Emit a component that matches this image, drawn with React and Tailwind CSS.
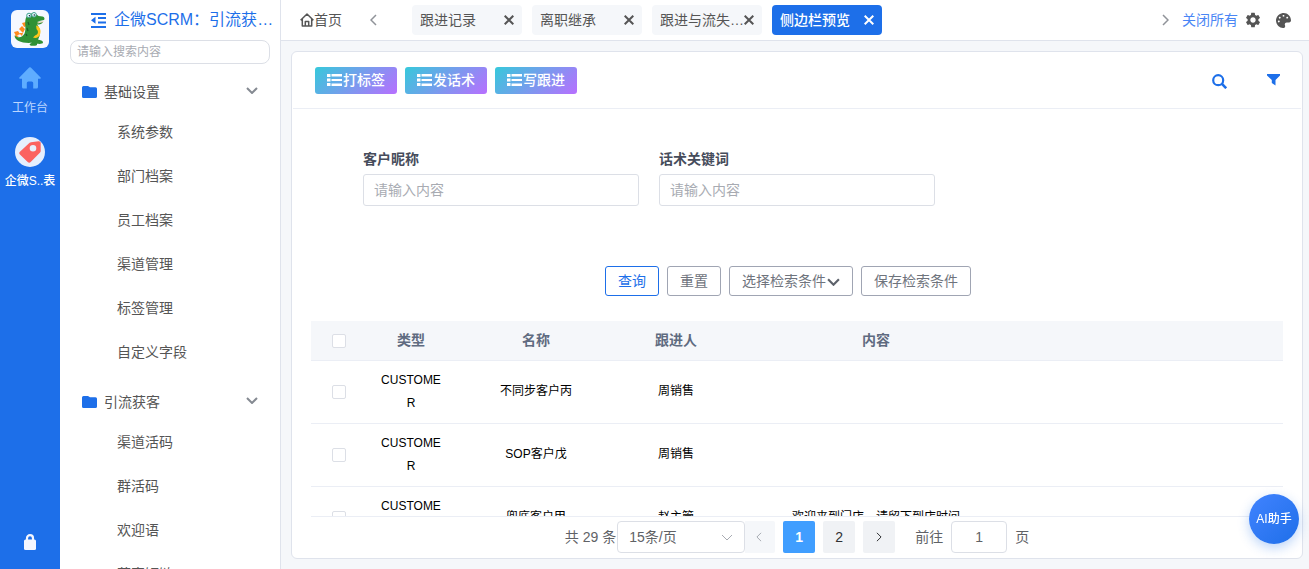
import { FaPalette } from "react-icons/fa";
import { MdSettings } from "react-icons/md";

const menu = [
  {
    title: "基础设置",
    items: ["系统参数", "部门档案", "员工档案", "渠道管理", "标签管理", "自定义字段"],
  },
  { title: "引流获客", items: ["渠道活码", "群活码", "欢迎语", "获客短链"] },
];

const tabs = [
  { label: "跟进记录" },
  { label: "离职继承" },
  { label: "跟进与流失分析" },
  { label: "侧边栏预览", active: true },
];

const rows = [
  { type: "CUSTOMER", name: "不同步客户丙", owner: "周销售", content: "" },
  { type: "CUSTOMER", name: "SOP客户戊", owner: "周销售", content: "" },
  { type: "CUSTOMER", name: "兜底客户甲", owner: "赵主管", content: "欢迎来到门店，请留下到店时间" },
];

function Crocodile() {
  return (
    <svg viewBox="0 0 38 38" className="size-[38px]" aria-hidden="true">
      <path
        d="M3 22l4-1 2 3-4 2zM5 28l-1-3 4 1zM8 19l3-3 3 3-2 4zM11 13l4-1 1 4-3 1zM12 23l-4 0 3 3z"
        fill="#ff8a1f"
      />
      <path
        d="M3.500 25.500c4 3 8 2 10-2 2-5 0-9 1-14 1-4 3-6 7-6 2 0 4 .500 6 2.500l4 .500c2 .500 2.500 2 1.500 3.500l-7 1.500 6 .500c-1 2-3 2.500-6 2.500 2 2 3 5 3 8 0 3-1 5-2 7 2 .500 5 1 5 3 0 1.500-3 1.500-6 1.300.500 1.700-1 2-4 2-3 0-4-.500-3-2l2-1C11 33.500 4 31 3.500 25.500z"
        fill="#2f9135"
      />
      <path d="M25 15.500c4 1 5.500 5 4 9-1 3-4 4-7 3 4-3 4-8 3-12z" fill="#ffc61a" />
      <path d="M21 20c3-1 5 0 5 2s-2 3-4 2" fill="none" stroke="#2f9135" strokeWidth="2" strokeLinecap="round" />
      <path d="M17 12l1 3M16 18l1 3M15 24l1 2" stroke="#1c5c2b" strokeWidth="1.200" />
      <path d="M32.500 11.500l-6 1.500" stroke="#f7d8c0" strokeWidth="1.200" />
      <circle cx="18" cy="5.500" r="2.300" fill="#e9fbff" stroke="#3f9f8f" strokeWidth="1" />
      <circle cx="23" cy="4.800" r="2.300" fill="#e9fbff" stroke="#3f9f8f" strokeWidth="1" />
      <circle cx="18.500" cy="5.700" r=".800" fill="#112233" />
      <circle cx="23.300" cy="5" r=".800" fill="#112233" />
    </svg>
  );
}

function Home() {
  return (
    <svg viewBox="0 0 22 22" className="size-[22px]" fill="currentColor" aria-hidden="true">
      <path d="M10.200.500a1.200 1.200 0 0 1 1.600 0l9.800 10c.500.600.200 1.300-.500 1.300H19v8.200a1.500 1.500 0 0 1-1.500 1.500h-3.300V16a1.500 1.500 0 0 0-1.500-1.500H9.300A1.500 1.500 0 0 0 7.800 16v5.500H4.500A1.500 1.500 0 0 1 3 20v-8.200H.900c-.700 0-1-.700-.500-1.300z" />
    </svg>
  );
}

function HomeOutline() {
  return (
    <svg
      viewBox="0 0 14 14"
      className="size-[14px]"
      fill="none"
      stroke="currentColor"
      strokeWidth="1.500"
      strokeLinejoin="round"
      aria-hidden="true"
    >
      <path d="M.600 7.300L7 1l6.400 6.300M2.300 6v7h9.400V6M5.300 13V8.600h3.400V13" />
    </svg>
  );
}

function Tag() {
  return (
    <svg viewBox="0 0 22 22" className="size-[22px]" aria-hidden="true">
      <path
        fillRule="evenodd"
        fill="#fb6260"
        d="M12 1.200 19.500.300a1.800 1.800 0 0 1 2.200 1.900V10a2 2 0 0 1-.600 1.400l-9.400 9.600a2.200 2.200 0 0 1-3 0L.900 13.500a2 2 0 0 1 0-2.800l9.700-8.900A3 3 0 0 1 12 1.200zM14 4a3.300 3.300 0 1 0 0 6.600A3.300 3.300 0 0 0 14 4z"
      />
    </svg>
  );
}

function Lock() {
  return (
    <svg viewBox="0 0 12 16" className="h-4 w-3" aria-hidden="true">
      <path d="M3 7V4.200a3 3 0 0 1 6 0V7" fill="none" stroke="#f5f7ff" strokeWidth="2.200" />
      <rect x="0" y="5.500" width="12" height="10.500" rx="1.500" fill="#f5f7ff" />
    </svg>
  );
}

function Fold() {
  return (
    <svg viewBox="0 0 15 15" className="h-[15px] w-[15px] shrink-0" fill="currentColor" aria-hidden="true">
      <path d="M0 0h15v2H0zM7 4h8v2H7zM7 8.500h8v2H7zM0 13h15v2H0zM4.500 3.800v7L0 7.300z" />
    </svg>
  );
}

function Folder() {
  return (
    <svg viewBox="0 0 15 12" className="h-3 w-[15px]" fill="currentColor" aria-hidden="true">
      <path d="M1.500 0H6l2 1.200h5.500A1.500 1.500 0 0 1 15 2.700v7.800a1.500 1.500 0 0 1-1.500 1.500h-12A1.500 1.500 0 0 1 0 10.500v-9A1.500 1.500 0 0 1 1.500 0z" />
    </svg>
  );
}

function Chevron({ className, width = 2, d = "M1 1l5 5 5-5", box = "0 0 12 7" }) {
  return (
    <svg viewBox={box} className={className} fill="none" stroke="currentColor" strokeWidth={width} aria-hidden="true">
      <path d={d} />
    </svg>
  );
}

function Arrow({ left, className, width }) {
  return <Chevron box="0 0 7 12" d={left ? "M6 1L1 6l5 5" : "M1 1l5 5-5 5"} className={className} width={width} />;
}

function Cross() {
  return (
    <svg viewBox="0 0 10 10" className="size-[10px]" stroke="currentColor" strokeWidth="2" aria-hidden="true">
      <path d="M.700.700l8.600 8.600M9.300.700L.700 9.300" />
    </svg>
  );
}

function ListIcon() {
  return (
    <svg viewBox="0 0 15 12" className="h-3 w-[15px]" fill="currentColor" aria-hidden="true">
      <path d="M0 0h3.500v3H0zM4.500 0H15v2.500H4.500zM0 4.500h3.500v3H0zM4.500 5H15v2H4.500zM0 9h3.500v3H0zM4.500 9.500H15V12H4.500z" />
    </svg>
  );
}

function Check({ label }) {
  return (
    <input
      type="checkbox"
      aria-label={label}
      className="mx-auto block size-[14px] appearance-none rounded-[2px] border border-[#dcdfe6] bg-white checked:bg-[#1d6fe9]"
    />
  );
}

function Field({ id, label }) {
  return (
    <div>
      <label htmlFor={id} className="block h-[25px] text-sm leading-5 font-bold text-[#464c5b]">
        {label}
      </label>
      <input
        id={id}
        placeholder="请输入内容"
        className="h-8 w-full rounded-[3px] border border-[#dcdfe6] px-[10px] text-sm outline-none placeholder:text-[#a8abb2]"
      />
    </div>
  );
}

function Rail() {
  return (
    <aside className="flex w-[60px] shrink-0 flex-col items-center bg-[#1d6fe9] pt-[10px] pb-[19px] text-xs">
      <div className="rounded-md bg-[#f5f8ff]">
        <Crocodile />
      </div>
      <a href="#work" className="mt-[19px] flex flex-col items-center text-[#5fadff]">
        <Home />
        <span className="mt-[9px] leading-5 text-[#bcd6ff]">工作台</span>
      </a>
      <a href="#scrm" className="mt-[19px] flex flex-col items-center text-white">
        <span className="flex size-[30px] items-center justify-center rounded-full bg-[#e6effd]">
          <Tag />
        </span>
        <span className="mt-1 leading-5 font-medium">企微S..表</span>
      </a>
      <button aria-label="锁屏" className="mt-auto">
        <Lock />
      </button>
    </aside>
  );
}

function Sidebar() {
  return (
    <nav className="flex w-[221px] shrink-0 flex-col border-r border-[#dfe3ec] bg-white">
      <div className="flex h-10 items-center gap-2 pr-1 pl-[31px] text-[#1d6fe9]">
        <Fold />
        <h1 className="truncate text-base">企微SCRM：引流获客管理</h1>
      </div>
      <div className="px-[10px]">
        <input
          aria-label="搜索菜单"
          placeholder="请输入搜索内容"
          className="block h-6 w-full rounded-lg border border-[#dcdfe6] px-[6px] text-xs outline-none placeholder:text-[#a8abb2]"
        />
      </div>
      <div className="min-h-0 flex-1 overflow-hidden text-sm text-[#555]">
        {menu.map((group) => (
          <section key={group.title}>
            <button className="mt-[10px] flex h-9 w-full items-center px-[22px]">
              <span className="text-[#1d6fe9]">
                <Folder />
              </span>
              <span className="ml-[7px]">{group.title}</span>
              <Chevron className="mb-[3px] ml-auto h-[7px] w-3 text-[#858a92]" />
            </button>
            <ul>
              {group.items.map((item) => (
                <li key={item}>
                  <a href="#menu" className="flex h-11 items-center pl-[57px]">
                    {item}
                  </a>
                </li>
              ))}
            </ul>
          </section>
        ))}
      </div>
    </nav>
  );
}

function TopBar() {
  return (
    <header className="flex h-[41px] shrink-0 items-center border-b border-[#dfe3ec] bg-white pr-[18px] pl-[19px] text-sm text-[#555]">
      <a href="#home" className="flex items-center">
        <HomeOutline />
        首页
      </a>
      <button aria-label="向左" className="ml-7 text-[#909399]">
        <Arrow left width={1.5} className="h-3 w-[7px]" />
      </button>
      <div className="ml-[35px] flex gap-[10px]">
        {tabs.map((tab) => (
          <div
            key={tab.label}
            className={
              "flex h-[30px] w-[110px] items-center rounded px-2 " +
              (tab.active ? "bg-[#1d6fe9] font-medium text-white" : "bg-[#f5f7fa]")
            }
          >
            <a href="#tab" className="w-[84px] truncate">
              {tab.label}
            </a>
            <button aria-label={"关闭" + tab.label}>
              <Cross />
            </button>
          </div>
        ))}
      </div>
      <button aria-label="向右" className="mr-[13px] ml-auto text-[#909399]">
        <Arrow width={1.5} className="h-3 w-[7px]" />
      </button>
      <button className="text-[#4a86f5]">关闭所有</button>
      <button aria-label="设置" className="ml-[6px]">
        <MdSettings className="size-[18px]" />
      </button>
      <button aria-label="主题" className="ml-[14px]">
        <FaPalette className="size-[15px]" />
      </button>
    </header>
  );
}

function SearchPanel() {
  return (
    <form onSubmit={(e) => e.preventDefault()}>
      <div className="grid grid-cols-3 gap-5 px-[71px] pt-10">
        <Field id="nickname" label="客户昵称" />
        <Field id="keyword" label="话术关键词" />
      </div>
      <div className="mt-[60px] flex justify-center gap-2 pr-[18px] text-sm text-[#6f747d]">
        <button className="h-[30px] rounded-[3px] border border-[#1d6fe9] px-3 text-[#1d6fe9]">查询</button>
        <button className="h-[30px] rounded-[3px] border border-[#a0a5b3] px-3">重置</button>
        <button className="flex h-[30px] items-center rounded-[3px] border border-[#a0a5b3] px-3">
          选择检索条件
          <Chevron width={2} className="mt-[2px] ml-px h-2 w-[13px] text-[#5d626b]" />
        </button>
        <button className="h-[30px] rounded-[3px] border border-[#a0a5b3] px-3">保存检索条件</button>
      </div>
    </form>
  );
}

function DataTable() {
  return (
    <div className="mx-[19px] mt-[25px] min-h-0 flex-1 overflow-hidden border-b border-[#ebeef5]">
      <table className="w-full table-fixed border-collapse text-center">
        <colgroup>
          <col className="w-[55px]" />
          <col className="w-[90px]" />
          <col className="w-[160px]" />
          <col className="w-[120px]" />
          <col className="w-[280px]" />
          <col />
        </colgroup>
        <thead className="bg-[#f5f7fa] text-sm text-[#5f6b80]">
          <tr className="h-[39px] border-b border-[#ebeef5]">
            <th className="pt-px">
              <Check label="全选" />
            </th>
            <th>类型</th>
            <th>名称</th>
            <th>跟进人</th>
            <th>内容</th>
            <th></th>
          </tr>
        </thead>
        <tbody className="text-xs leading-[23px] text-black">
          {rows.map((row) => (
            <tr key={row.name} className="h-[63px] border-b border-[#ebeef5]">
              <td>
                <Check label={"选择" + row.name} />
              </td>
              <td className="px-3 py-2 break-all">{row.type}</td>
              <td className="px-3">{row.name}</td>
              <td className="px-3">{row.owner}</td>
              <td className="px-3">{row.content}</td>
              <td></td>
            </tr>
          ))}
        </tbody>
      </table>
    </div>
  );
}

function Pagination() {
  return (
    <div className="flex shrink-0 items-center justify-center pt-1 pb-[5px] text-sm text-[#606266]">
      <span className="mr-px">共 29 条</span>
      <div className="grid h-8 w-32 items-center">
        <select
          aria-label="每页条数"
          className="col-start-1 row-start-1 h-8 w-full appearance-none rounded border border-[#dcdfe6] bg-white pl-[11px]"
        >
          <option>15条/页</option>
        </select>
        <Chevron
          width={1}
          className="pointer-events-none col-start-1 row-start-1 mr-3 h-[7px] w-3 justify-self-end text-[#a8abb2]"
        />
      </div>
      <button
        aria-label="上一页"
        disabled
        className="flex h-8 w-[30px] items-center justify-center rounded-r-[2px] bg-[#f5f7fa] text-[#a8abb2]"
      >
        <Arrow left width={1.2} className="mr-[2px] h-[10px] w-[6px]" />
      </button>
      <button className="ml-2 size-8 rounded-[2px] bg-[#409eff] font-bold text-white">1</button>
      <button className="ml-2 size-8 rounded-[2px] bg-[#f0f2f5] text-[#303133]">2</button>
      <button
        aria-label="下一页"
        className="ml-2 flex size-8 items-center justify-center rounded-[2px] bg-[#f0f2f5] text-[#303133]"
      >
        <Arrow width={1.2} className="h-[10px] w-[6px]" />
      </button>
      <label htmlFor="goto" className="ml-5">
        前往
      </label>
      <input
        id="goto"
        defaultValue="1"
        className="mx-2 h-8 w-14 rounded border border-[#dcdfe6] text-center outline-none"
      />
      <span>页</span>
    </div>
  );
}

export default function App() {
  return (
    <div className="flex h-screen overflow-hidden bg-[#f5f7fa] font-['Liberation_Sans','Noto_Sans_CJK_SC',sans-serif]">
      <Rail />
      <Sidebar />
      <div className="flex min-w-0 flex-1 flex-col">
        <TopBar />
        <main className="mt-[10px] mr-[6px] mb-[10px] ml-[10px] flex min-h-0 flex-1 flex-col rounded-md border border-[#dfe3ec] bg-white">
          <div className="mx-px flex h-[57px] shrink-0 items-center gap-2 border-b border-[#ebeef5] pr-[21px] pl-[22px] text-sm font-medium text-white">
            {["打标签", "发话术", "写跟进"].map((label) => (
              <button
                key={label}
                className="flex h-[27px] w-[82px] items-center justify-center gap-px rounded-[3px] bg-[linear-gradient(135deg,#36c9db,#b86fff)]"
              >
                <ListIcon />
                {label}
              </button>
            ))}
            <button aria-label="搜索" className="mt-[2px] ml-auto text-[#1d6fe9]">
              <svg viewBox="0 0 15 15" className="size-[15px]" fill="none" stroke="currentColor" aria-hidden="true">
                <circle cx="6.200" cy="6.200" r="5" strokeWidth="2.200" />
                <path d="M9.700 9.700l4.500 4.500" strokeWidth="2.600" />
              </svg>
            </button>
            <button aria-label="筛选" className="ml-8 text-[#1d6fe9]">
              <svg viewBox="0 0 13 12" className="h-3 w-[13px]" fill="currentColor" aria-hidden="true">
                <path d="M0 0h13v1.500L8.500 6v5.500L4.800 9V6L0 1.500z" />
              </svg>
            </button>
          </div>
          <SearchPanel />
          <DataTable />
          <Pagination />
        </main>
      </div>
      <button className="fixed right-[10px] bottom-[25px] size-[50px] rounded-full bg-linear-to-br from-[#4083ff] to-[#1d6fe9] text-xs font-medium text-white shadow-[0_4px_12px_rgba(29,111,233,0.300)]">
        AI助手
      </button>
    </div>
  );
}
